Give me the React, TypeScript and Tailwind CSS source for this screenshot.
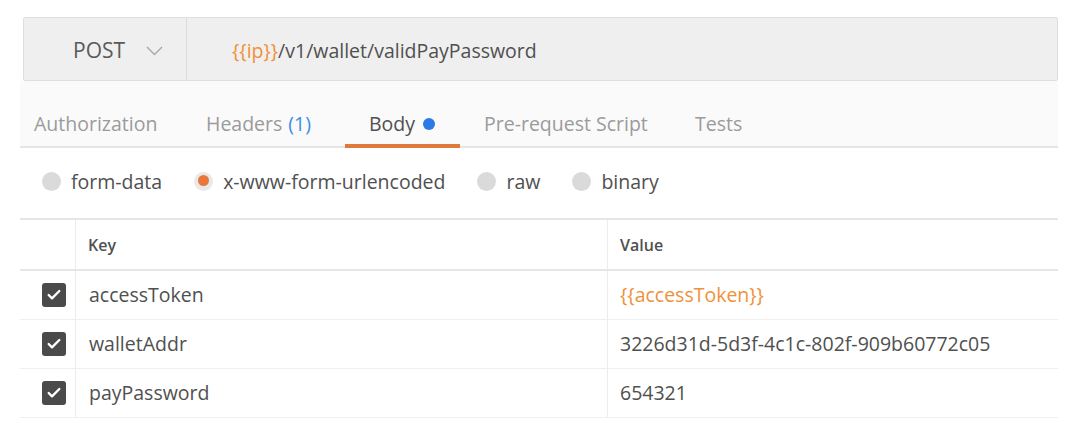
import { Check } from "lucide-react";

const rows = [
  { key: "accessToken", value: "{{accessToken}}", variable: true },
  { key: "walletAddr", value: "3226d31d-5d3f-4c1c-802f-909b60772c05", variable: false },
  { key: "payPassword", value: "654321", variable: false },
];

function Radio({ label, active }: { label: string; active?: boolean }) {
  return (
    <div className="flex items-center gap-[10px]">
      <span
        className={
          "h-[19px] w-[19px] rounded-full flex items-start justify-center pt-[3px] " +
          (active ? "bg-[#e9e9e9]" : "bg-[#dadada]")
        }
      >
        {active && <span className="h-[11px] w-[11px] rounded-full bg-[#e8773a]" />}
      </span>
      <span>{label}</span>
    </div>
  );
}

export default function App() {
  return (
    <div
      className="w-[1084px] h-[430px] bg-white text-[19.5px] text-[#505050] overflow-hidden"
      style={{ fontFamily: '"Open Sans", "Noto Sans", sans-serif' }}
    >
      <div className="pt-[17px] pl-[23px] pr-[26px]">
        {/* url bar */}
        <div className="flex h-[64px] border border-[#dedede] bg-[#efefef] rounded-[2px]">
          <div className="w-[163px] flex items-center pl-[49px] pt-[3px] gap-[21px] border-r border-[#dcdcdc] text-[21px] text-[#5a5a5a]">
            <span>POST</span>
            <svg width="17" height="10" viewBox="0 0 17 10" fill="none">
              <path d="M1 1l7.5 7.5L16 1" stroke="#a8a8a8" strokeWidth="1.4" />
            </svg>
          </div>
          <div className="flex items-center pl-[45px] pt-[3px] text-[#505050]">
            <span className="text-[#f0913a]">{"{{ip}}"}</span>
            <span>/v1/wallet/validPayPassword</span>
          </div>
        </div>
      </div>

      <div className="pl-[20px] pr-[26px]">
        {/* tabs */}
        <div className="flex h-[67px] bg-[#fafafa] border-b-2 border-[#e5e5e5] text-[#9b9b9b]">
          <div className="w-[186px] pl-[14px] pt-[20px] flex items-center">Authorization</div>
          <div className="w-[139px] pt-[20px] flex items-center gap-[6px]">
            Headers <span className="text-[#3b8ee8]">(1)</span>
          </div>
          <div className="relative w-[115px] pl-[24px] pt-[20px] flex items-center gap-[8px] text-[#505050]">
            Body
            <span className="h-[12px] w-[12px] rounded-full bg-[#2a7be4]" />
            <span className="absolute left-0 right-0 -bottom-[2px] h-[4px] bg-[#e07a3c]" />
          </div>
          <div className="w-[235px] pl-[24px] pt-[20px] flex items-center">Pre-request Script</div>
          <div className="pt-[20px] flex items-center">Tests</div>
        </div>

        {/* body mode */}
        <div className="flex items-center h-[70px] pl-[22px] pb-[3px] gap-[32px]">
          <Radio label="form-data" />
          <Radio label="x-www-form-urlencoded" active />
          <Radio label="raw" />
          <Radio label="binary" />
        </div>

        {/* params table */}
        <div className="border-t-2 border-[#e6e6e6]">
          <div className="grid grid-cols-[55px_532px_1fr] h-[51px] border-b-2 border-[#e6e6e6] text-[16px] font-semibold text-[#505050]">
            <div />
            <div className="border-l border-[#ececec] flex items-center pl-[12px]">Key</div>
            <div className="border-l border-[#ececec] flex items-center pl-[12px]">Value</div>
          </div>
          {rows.map((r) => (
            <div
              key={r.key}
              className="grid grid-cols-[55px_532px_1fr] h-[49px] border-b border-[#efefef]"
            >
              <div className="flex items-center pl-[22px]">
                <span className="h-[24px] w-[24px] rounded-[3px] bg-[#4a4a4a] flex items-center justify-center">
                  <Check className="w-[16px] h-[16px] text-white" strokeWidth={3.5} />
                </span>
              </div>
              <div className="border-l border-[#ececec] flex items-center pl-[13px]">{r.key}</div>
              <div
                className={
                  "border-l border-[#ececec] flex items-center pl-[12px] " +
                  (r.variable ? "text-[#f0913a]" : "")
                }
              >
                {r.value}
              </div>
            </div>
          ))}
        </div>
      </div>
    </div>
  );
}
